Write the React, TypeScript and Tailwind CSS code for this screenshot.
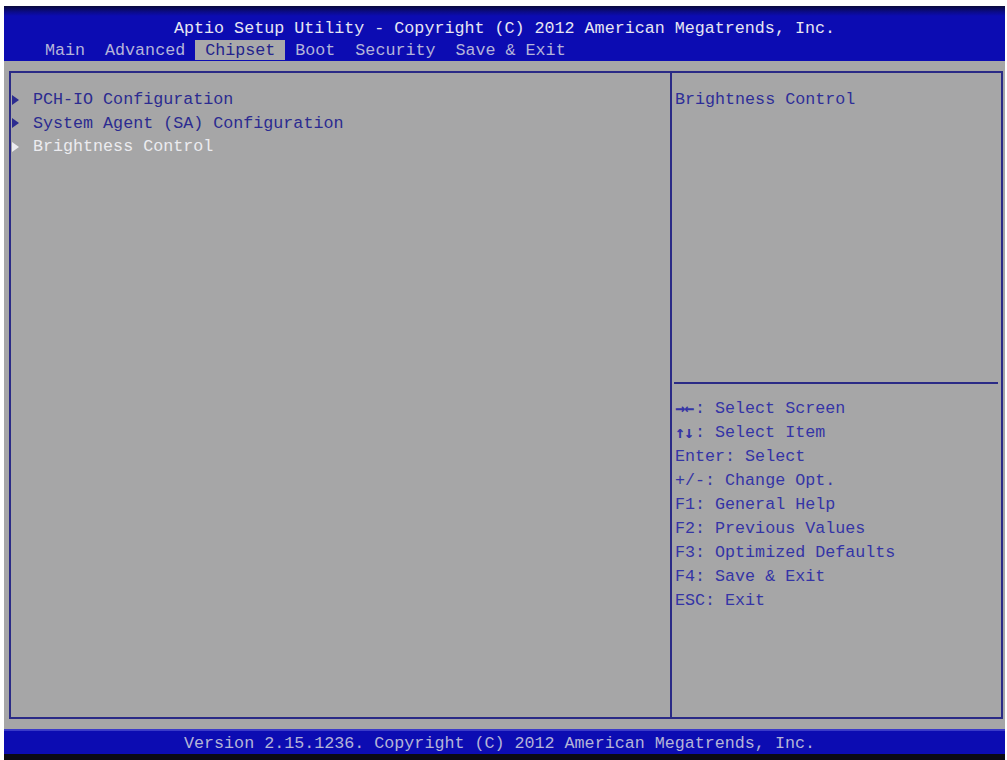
import React from "react";

const mono = { fontFamily: '"Liberation Mono", "DejaVu Sans Mono", monospace' };
const arrowFont = { fontFamily: '"DejaVu Sans Mono", monospace' };

function Tri({ color }: { color: string }) {
  return (
    <svg width="7" height="10" viewBox="0 0 7 10" className="shrink-0">
      <polygon points="0,0 7,5 0,10" fill={color} />
    </svg>
  );
}

const tabs = ["Main", "Advanced", "Chipset", "Boot", "Security", "Save & Exit"];

const help: [string, string][] = [
  ["→←", ": Select Screen"],
  ["↑↓", ": Select Item"],
  ["", "Enter: Select"],
  ["", "+/-: Change Opt."],
  ["", "F1: General Help"],
  ["", "F2: Previous Values"],
  ["", "F3: Optimized Defaults"],
  ["", "F4: Save & Exit"],
  ["", "ESC: Exit"],
];

export default function App() {
  return (
    <div className="w-[1007px] h-[760px] bg-white overflow-hidden" style={mono}>
      <div className="ml-[4px] pt-[6px] w-[1001px] flex flex-col text-[16.7px]">
        {/* Header */}
        <div className="h-[55px] flex flex-col bg-[linear-gradient(to_bottom,#0a0a3c_0px,#0b0b8a_6px,#0c0cb2_10px,#0c0cb2_100%)]">
          <div className="pt-[12px] h-[33px] leading-[22px] text-center text-[#e6e6f2] whitespace-pre">
            Aptio Setup Utility - Copyright (C) 2012 American Megatrends, Inc.
          </div>
          <div className="mt-[1px] h-[20px] flex pl-[31px] leading-[21px] whitespace-pre">
            {tabs.map((t) =>
              t === "Chipset" ? (
                <span key={t} className="bg-[#a9a9aa] text-[#23238c] px-[10px]">
                  {t}
                </span>
              ) : (
                <span key={t} className="text-[#b4b4da] px-[10px]">
                  {t}
                </span>
              )
            )}
          </div>
        </div>

        {/* Body */}
        <div className="h-[668px] bg-[#a6a6a7] pl-[5px] pr-[2px] pt-[10px] pb-[10px]">
          <div className="h-[648px] border-2 border-[#2a2a86] flex">
            <div className="w-[661px] border-r-2 border-[#2a2a86] pt-[15px] flex flex-col">
              {[
                ["PCH-IO Configuration", "#2b2b90"],
                ["System Agent (SA) Configuration", "#2b2b90"],
                ["Brightness Control", "#ececf0"],
              ].map(([label, color]) => (
                <div key={label} className="h-[23.6px] flex items-center leading-[23.6px]">
                  <span className="w-[22px] flex items-center pl-[1px]">
                    <Tri color={color} />
                  </span>
                  <span style={{ color }} className="whitespace-pre">
                    {label}
                  </span>
                </div>
              ))}
            </div>
            <div className="flex-1 flex flex-col">
              <div className="h-[309px] pt-[15px] pl-[3px] leading-[24px] text-[#2e2e98] whitespace-pre">
                Brightness Control
              </div>
              <div className="h-[2px] bg-[#2a2a86] ml-[2px] mr-[3px]" />
              <div className="pt-[13px] pl-[3px] flex flex-col">
                {help.map(([arr, rest], i) => (
                  <div key={i} className="h-[24px] flex items-start text-[#3434a6] whitespace-pre">
                    {arr && (
                      <span className="block h-[24px] leading-[22px] font-bold w-[20px] shrink-0 tracking-[-1px]" style={arrowFont}>
                        {arr}
                      </span>
                    )}
                    <span className="block h-[24px] leading-[24px]">{rest}</span>
                  </div>
                ))}
              </div>
            </div>
          </div>
        </div>

        {/* Footer */}
        <div className="h-[25px] bg-[#0c0cb2] border-t-2 border-[#3a3ac8] pt-[2px] pr-[10px] leading-[21px] text-center text-[#b4b4d8] whitespace-pre">
          Version 2.15.1236. Copyright (C) 2012 American Megatrends, Inc.
        </div>
        <div className="h-[6px] bg-[#0a0a14]" />
      </div>
    </div>
  );
}
